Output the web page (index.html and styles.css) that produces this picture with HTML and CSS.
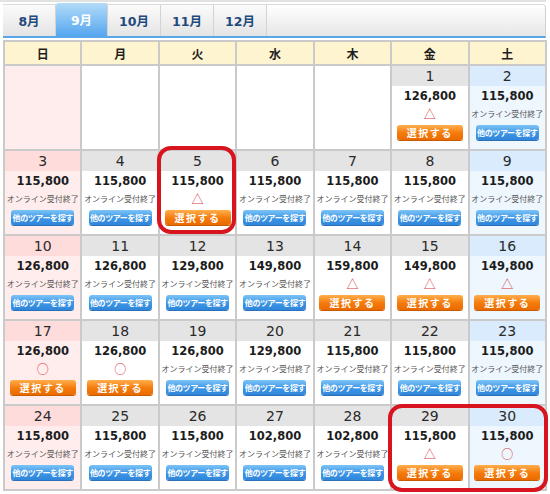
FILE: index.html
```html
<!DOCTYPE html>
<html lang="ja">
<head>
    <meta charset="UTF-8">
    <title>ツアーカレンダー</title>
    <link rel="stylesheet" href="styles.css">
</head>
<body>
    <div class="topline"></div>

    <div class="tabs">
        <div class="tab">8月</div>
        <div class="tab active">9月</div>
        <div class="tab">10月</div>
        <div class="tab">11月</div>
        <div class="tab">12月</div>
    </div>

    <div class="calendar">
        <div class="head">日</div>
        <div class="head">月</div>
        <div class="head">火</div>
        <div class="head">水</div>
        <div class="head">木</div>
        <div class="head">金</div>
        <div class="head">土</div>

        <!-- 1週目 -->
        <div class="day sun empty"></div>
        <div class="day empty"></div>
        <div class="day empty"></div>
        <div class="day empty"></div>
        <div class="day empty"></div>
        <div class="day">
            <div class="date">1</div>
            <div class="price">126,800</div>
            <div class="mark">△</div>
            <a class="btn btn-select">選択する</a>
        </div>
        <div class="day sat">
            <div class="date">2</div>
            <div class="price">115,800</div>
            <div class="status">オンライン受付終了</div>
            <a class="btn btn-other">他のツアーを探す</a>
        </div>

        <!-- 2週目 -->
        <div class="day sun">
            <div class="date">3</div>
            <div class="price">115,800</div>
            <div class="status">オンライン受付終了</div>
            <a class="btn btn-other">他のツアーを探す</a>
        </div>
        <div class="day">
            <div class="date">4</div>
            <div class="price">115,800</div>
            <div class="status">オンライン受付終了</div>
            <a class="btn btn-other">他のツアーを探す</a>
        </div>
        <div class="day">
            <div class="date">5</div>
            <div class="price">115,800</div>
            <div class="mark">△</div>
            <a class="btn btn-select">選択する</a>
        </div>
        <div class="day">
            <div class="date">6</div>
            <div class="price">115,800</div>
            <div class="status">オンライン受付終了</div>
            <a class="btn btn-other">他のツアーを探す</a>
        </div>
        <div class="day">
            <div class="date">7</div>
            <div class="price">115,800</div>
            <div class="status">オンライン受付終了</div>
            <a class="btn btn-other">他のツアーを探す</a>
        </div>
        <div class="day">
            <div class="date">8</div>
            <div class="price">115,800</div>
            <div class="status">オンライン受付終了</div>
            <a class="btn btn-other">他のツアーを探す</a>
        </div>
        <div class="day sat">
            <div class="date">9</div>
            <div class="price">115,800</div>
            <div class="status">オンライン受付終了</div>
            <a class="btn btn-other">他のツアーを探す</a>
        </div>

        <!-- 3週目 -->
        <div class="day sun">
            <div class="date">10</div>
            <div class="price">126,800</div>
            <div class="status">オンライン受付終了</div>
            <a class="btn btn-other">他のツアーを探す</a>
        </div>
        <div class="day">
            <div class="date">11</div>
            <div class="price">126,800</div>
            <div class="status">オンライン受付終了</div>
            <a class="btn btn-other">他のツアーを探す</a>
        </div>
        <div class="day">
            <div class="date">12</div>
            <div class="price">129,800</div>
            <div class="status">オンライン受付終了</div>
            <a class="btn btn-other">他のツアーを探す</a>
        </div>
        <div class="day">
            <div class="date">13</div>
            <div class="price">149,800</div>
            <div class="status">オンライン受付終了</div>
            <a class="btn btn-other">他のツアーを探す</a>
        </div>
        <div class="day">
            <div class="date">14</div>
            <div class="price">159,800</div>
            <div class="mark">△</div>
            <a class="btn btn-select">選択する</a>
        </div>
        <div class="day">
            <div class="date">15</div>
            <div class="price">149,800</div>
            <div class="mark">△</div>
            <a class="btn btn-select">選択する</a>
        </div>
        <div class="day sat">
            <div class="date">16</div>
            <div class="price">149,800</div>
            <div class="mark">△</div>
            <a class="btn btn-select">選択する</a>
        </div>

        <!-- 4週目 -->
        <div class="day sun">
            <div class="date">17</div>
            <div class="price">126,800</div>
            <div class="mark">○</div>
            <a class="btn btn-select">選択する</a>
        </div>
        <div class="day">
            <div class="date">18</div>
            <div class="price">126,800</div>
            <div class="mark">○</div>
            <a class="btn btn-select">選択する</a>
        </div>
        <div class="day">
            <div class="date">19</div>
            <div class="price">126,800</div>
            <div class="status">オンライン受付終了</div>
            <a class="btn btn-other">他のツアーを探す</a>
        </div>
        <div class="day">
            <div class="date">20</div>
            <div class="price">129,800</div>
            <div class="status">オンライン受付終了</div>
            <a class="btn btn-other">他のツアーを探す</a>
        </div>
        <div class="day">
            <div class="date">21</div>
            <div class="price">115,800</div>
            <div class="status">オンライン受付終了</div>
            <a class="btn btn-other">他のツアーを探す</a>
        </div>
        <div class="day">
            <div class="date">22</div>
            <div class="price">115,800</div>
            <div class="status">オンライン受付終了</div>
            <a class="btn btn-other">他のツアーを探す</a>
        </div>
        <div class="day sat">
            <div class="date">23</div>
            <div class="price">115,800</div>
            <div class="status">オンライン受付終了</div>
            <a class="btn btn-other">他のツアーを探す</a>
        </div>

        <!-- 5週目 -->
        <div class="day sun">
            <div class="date">24</div>
            <div class="price">115,800</div>
            <div class="status">オンライン受付終了</div>
            <a class="btn btn-other">他のツアーを探す</a>
        </div>
        <div class="day">
            <div class="date">25</div>
            <div class="price">115,800</div>
            <div class="status">オンライン受付終了</div>
            <a class="btn btn-other">他のツアーを探す</a>
        </div>
        <div class="day">
            <div class="date">26</div>
            <div class="price">115,800</div>
            <div class="status">オンライン受付終了</div>
            <a class="btn btn-other">他のツアーを探す</a>
        </div>
        <div class="day">
            <div class="date">27</div>
            <div class="price">102,800</div>
            <div class="status">オンライン受付終了</div>
            <a class="btn btn-other">他のツアーを探す</a>
        </div>
        <div class="day">
            <div class="date">28</div>
            <div class="price">102,800</div>
            <div class="status">オンライン受付終了</div>
            <a class="btn btn-other">他のツアーを探す</a>
        </div>
        <div class="day">
            <div class="date">29</div>
            <div class="price">115,800</div>
            <div class="mark">△</div>
            <a class="btn btn-select">選択する</a>
        </div>
        <div class="day sat">
            <div class="date">30</div>
            <div class="price">115,800</div>
            <div class="mark">○</div>
            <a class="btn btn-select">選択する</a>
        </div>
    </div>

    <!-- 赤枠の注目マーク -->
    <div class="highlight hl-5"></div>
    <div class="highlight hl-29"></div>
</body>
</html>
```

FILE: styles.css
```css
body {
    margin: 0;
    width: 550px;
    height: 494px;
    position: relative;
    background-color: #fff;
    font-family: "DejaVu Sans", "Noto Sans CJK JP", sans-serif;
    color: #222;
}
.topline {
    height: 2px;
    margin: 0 4px 0 0;
    background-color: #e2e2e2;
}
.tabs {
    display: flex;
    margin: 2px 4px 0 3px;
    height: 31px;
    background: linear-gradient(#ffffff, #e6e6e6);
    border-top: 1px solid #dadada;
    border-right: 1px solid #d0d0d0;
    border-bottom: 2px solid #5aa6e8;
    border-radius: 0 4px 0 0;
}
.tab {
    width: 52px;
    display: flex;
    align-items: center;
    justify-content: center;
    font-size: 12.5px;
    font-weight: bold;
    color: #1f4a7c;
    border-right: 1px solid #d3d3d3;
    background: linear-gradient(#fbfbfb, #e4e4e4);
}
.tab.active {
    width: 51px;
    margin-top: -2px;
    color: #fff;
    background: linear-gradient(#b2dbf9, #56a7ef);
    border-radius: 3px 3px 0 0;
}
.calendar {
    display: grid;
    grid-template-columns: repeat(7, 1fr);
    grid-template-rows: 22px repeat(5, 83px);
    gap: 2px;
    padding: 2px;
    width: 540px;
    margin: 2px 0 0 3px;
    background-color: #cacaca;
}
.head {
    display: flex;
    align-items: center;
    justify-content: center;
    background-color: #fff4d0;
    font-size: 12px;
    font-weight: bold;
    color: #1e1e1e;
}
.day {
    background-color: #fff;
    text-align: center;
}
.day.sun {
    background-color: #ffeded;
}
.day.sat {
    background-color: #eef6fe;
}
.date {
    height: 20px;
    line-height: 20px;
    font-size: 14px;
    color: #2a2a2a;
    background-color: #e4e4e4;
}
.sun .date {
    background-color: #ffdcdc;
}
.sat .date {
    background-color: #d9ebfc;
}
.price {
    margin-top: 2px;
    height: 16px;
    line-height: 16px;
    font-size: 11.5px;
    font-weight: bold;
    color: #1c1c1c;
    margin-bottom: 4px;
}
.status {
    height: 12px;
    line-height: 12px;
    font-size: 8px;
    color: #555;
    white-space: nowrap;
    font-family: "Noto Sans CJK JP", sans-serif;
}
.mark {
    height: 12px;
    line-height: 12px;
    font-size: 12px;
    color: #d93a44;
    font-family: "Noto Sans CJK JP", sans-serif;
}
.btn {
    display: block;
    width: 66px;
    height: 15px;
    line-height: 15px;
    margin: 5px auto 0;
    border-radius: 3px;
    color: #fff;
    font-family: "Noto Sans CJK JP", sans-serif;
    font-weight: bold;
    white-space: nowrap;
    overflow: hidden;
}
.btn-select {
    font-size: 10px;
    letter-spacing: 1.5px;
    background: linear-gradient(#ffae4d, #f47a0b 55%, #ea6a00);
    box-shadow: 0 1px 0 #c85a00;
}
.btn-other {
    width: 63px;
    font-size: 8px;
    letter-spacing: -0.4px;
    background: linear-gradient(#7cc4f7, #3d95e6 55%, #2f86da);
    box-shadow: 0 1px 0 #2a70b8;
}
.highlight {
    position: absolute;
    border: 4px solid #d8141f;
    border-radius: 14px;
    box-sizing: border-box;
}
.hl-5 {
    left: 157px;
    top: 146px;
    width: 79px;
    height: 88px;
}
.hl-29 {
    left: 388px;
    top: 404px;
    width: 160px;
    height: 88px;
}
```
